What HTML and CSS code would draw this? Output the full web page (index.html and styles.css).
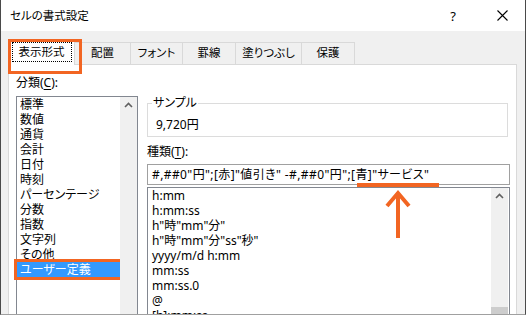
FILE: index.html
```html
<!DOCTYPE html>
<html lang="ja">
<head>
<meta charset="utf-8">
<link rel="stylesheet" href="styles.css">
</head>
<body>
<div class="window">
  <header class="titlebar">
    <span class="title">セルの書式設定</span>
    <span class="help">?</span>
    <span class="close"><svg width="11" height="11" viewBox="0 0 11 11"><path d="M0.5 0.5 L10.5 10.5 M10.5 0.5 L0.5 10.5" stroke="#000" stroke-width="1.1" fill="none"/></svg></span>
  </header>
  <div class="dialog">
    <nav class="tabs">
      <div class="tab selected"><span class="focus">表示形式</span></div>
      <div class="tab t-haichi">配置</div>
      <div class="tab t-font">フォント</div>
      <div class="tab t-keisen">罫線</div>
      <div class="tab t-nuri">塗りつぶし</div>
      <div class="tab t-hogo">保護</div>
    </nav>
    <section class="panel">
      <div class="left">
        <div class="label">分類(<u>C</u>):</div>
        <div class="listbox">
          <ul class="items">
            <li>標準</li>
            <li>数値</li>
            <li>通貨</li>
            <li>会計</li>
            <li>日付</li>
            <li>時刻</li>
            <li>パーセンテージ</li>
            <li>分数</li>
            <li>指数</li>
            <li>文字列</li>
            <li>その他</li>
            <li class="active">ユーザー定義</li>
          </ul>
          <div class="scrollbar"><svg class="chev" width="9" height="6" viewBox="0 0 9 6"><path d="M1 5 L4.5 1.5 L8 5" stroke="#606060" stroke-width="1.6" fill="none"/></svg></div>
        </div>
      </div>
      <div class="right">
        <fieldset class="sample">
          <legend>サンプル</legend>
          <div class="sample-value">9,720円</div>
        </fieldset>
        <div class="label kind">種類(<u>T</u>):</div>
        <div class="input">#,##0"円";[赤]"値引き" -#,##0"円";[青]"サービス"</div>
        <div class="listbox formats">
          <ul class="items">
            <li>h:mm</li>
            <li>h:mm:ss</li>
            <li>h"時"mm"分"</li>
            <li>h"時"mm"分"ss"秒"</li>
            <li>yyyy/m/d h:mm</li>
            <li>mm:ss</li>
            <li>mm:ss.0</li>
            <li>@</li>
            <li>[h]:mm:ss</li>
          </ul>
          <div class="scrollbar"><svg class="chev" width="9" height="6" viewBox="0 0 9 6"><path d="M1 5 L4.5 1.5 L8 5" stroke="#606060" stroke-width="1.6" fill="none"/></svg><div class="thumb"></div></div>
        </div>
      </div>
    </section>
  </div>
  <svg class="annotation" width="100" height="70" viewBox="0 0 100 70">
    <rect x="2" y="2" width="82" height="4" fill="#f26522"/>
    <path d="M43 57 L43 12" stroke="#f26522" stroke-width="4" fill="none"/>
    <path d="M32 25 L43 12 L54 25" stroke="#f26522" stroke-width="4" fill="none"/>
  </svg>
</div>
</body>
</html>
```
FILE: styles.css
```css
* { box-sizing: border-box; }
html, body { margin: 0; padding: 0; }
body {
  width: 526px;
  height: 315px;
  overflow: hidden;
  font-family: "Noto Sans", "Noto Sans CJK JP", sans-serif;
  font-feature-settings: "palt";
  font-size: 12px;
  color: #000;
}
.window {
  position: relative;
  width: 526px;
  height: 315px;
  background: #f0f0f0;
  border-left: 1px solid #4a4a4a;
  border-right: 1px solid #4a4a4a;
  border-bottom: 1px solid #a0a0a0;
  overflow: hidden;
}
.titlebar {
  height: 31px;
  background: #fff;
  display: flex;
  align-items: center;
  padding-left: 9px;
}
.title { flex: 1; font-size: 11.5px; line-height: 16px; }
.help { width: 12px; text-align: center; font-size: 13px; margin-right: 38px; line-height: 16px; }
.close { width: 11px; height: 11px; display: flex; margin-right: 17px; }
.dialog {
  padding: 8px 8px 0 7px;
}
.tabs {
  display: flex;
  align-items: flex-end;
  height: 25px;
  position: relative;
  z-index: 2;
}
.tab {
  height: 22px;
  border: 1px solid #d9d9d9;
  border-bottom: none;
  margin-left: -1px;
  background: #f0f0f0;
  display: flex;
  align-items: center;
  justify-content: center;
  line-height: 16px;
  padding-bottom: 1px;
  font-size: 11.5px;
}
.tab.selected {
  margin-left: 0;
  width: 67px;
  height: 26px;
  margin-bottom: -1px;
  background: #fff;
  position: relative;
  z-index: 3;
  padding-bottom: 2px;
}
.tab.selected .focus {
  border: 1px dotted #000;
  width: 60px;
  height: 20px;
  display: flex;
  align-items: center;
  justify-content: center;
}
.tab.selected::after {
  content: "";
  position: absolute;
  left: -1px;
  top: -1px;
  width: 68px;
  height: 29px;
  border: 3px solid #f26522;
}
.t-haichi { width: 57px; }
.t-font { width: 53px; }
.t-keisen { width: 54px; }
.t-nuri { width: 67px; }
.t-hogo { width: 54px; }
.panel {
  background: #fff;
  border: 1px solid #d9d9d9;
  height: 260px;
  display: flex;
  gap: 9px;
  padding-left: 7px;
}
.label { line-height: 16px; margin-top: 10px; }
.label u { text-underline-offset: 2px; }
.listbox {
  margin-top: 5px;
  border: 1px solid #828790;
  display: flex;
  height: 240px;
  background: #fff;
}
.left { width: 122px; }
.items {
  list-style: none;
  margin: 0;
  padding: 0;
  flex: 1;
}
.items li {
  height: 15px;
  line-height: 15px;
  padding-left: 3px;
  white-space: nowrap;
  position: relative;
}
.items li.active {
  background: #3399ff;
  color: #fff;
}
.items li.active::after {
  content: "";
  position: absolute;
  left: -3px;
  top: -3px;
  right: -3px;
  bottom: -3px;
  border: 3px solid #f26522;
}
.scrollbar {
  width: 17px;
  background: #f0f0f0;
  display: flex;
  flex-direction: column;
  align-items: center;
  position: relative;
}
.chev { margin-top: 5px; }
.right { width: 363px; }
.sample {
  margin: 30px 2px 0 0;
  padding: 6px 8px 3px 8px;
  border: 1px solid #dcdcdc;
  min-width: 0;
}
.sample legend {
  padding: 0 1px;
  margin-left: -4px;
  line-height: 16px;
}
.sample-value { line-height: 16px; }
.label.kind { margin-top: 7px; }
.input {
  margin-top: 4px;
  height: 21px;
  border: 1px solid #a0a0a0;
  padding-left: 4px;
  line-height: 19px;
  white-space: nowrap;
  letter-spacing: 0.4px;
}
.formats {
  margin-top: 2px;
  height: 140px;
}
.formats .items li { padding-left: 4px; }
.formats .scrollbar { margin-right: 1px; }
.thumb {
  position: absolute;
  left: 0;
  right: 0;
  top: 119px;
  height: 30px;
  background: #cdcdcd;
}
.annotation {
  position: absolute;
  left: 354px;
  top: 181px;
  pointer-events: none;
}
```
